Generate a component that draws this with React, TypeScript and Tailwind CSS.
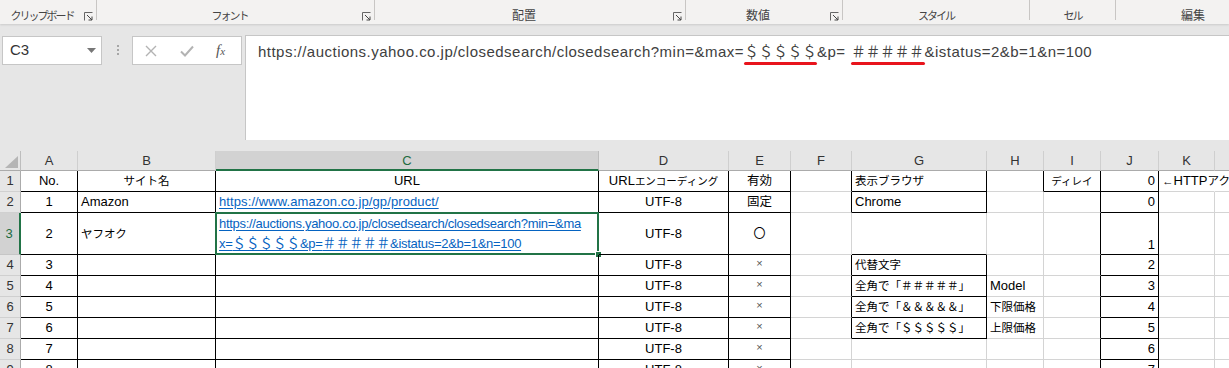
import React from "react";

const COLS = ["A", "B", "C", "D", "E", "F", "G", "H", "I", "J", "K", "L"];
const ROWS = [1, 2, 3, 4, 5, 6, 7, 8, 9];

const Jp = ({ children }: { children: React.ReactNode }) => (
  <span className="text-[11.5px]">{children}</span>
);
const Js = ({ children }: { children: React.ReactNode }) => (
  <span className="text-[10.5px]">{children}</span>
);

const boxed = (r: number, c: number) => {
  if (r < 1 || r > 9) return false;
  if (c >= 0 && c <= 4) return true;
  if (c === 6 && (r === 1 || r === 2 || (r >= 4 && r <= 7))) return true;
  if (c === 8 && r === 1) return true;
  if (c === 9) return true;
  return false;
};

type Cell = {
  node: React.ReactNode;
  h?: "l" | "c" | "r";
  v?: "t" | "m" | "b";
  cls?: string;
};

const Link = ({ children }: { children: React.ReactNode }) => (
  <span className="text-[#0563c1] underline underline-offset-[2px]">{children}</span>
);

const cells: Record<string, Cell> = {
  "1,0": { node: "No.", h: "c" },
  "1,1": { node: <Jp>サイト名</Jp>, h: "c" },
  "1,2": { node: "URL", h: "c" },
  "1,3": { node: <>URL<Js>エンコーディング</Js></>, h: "c" },
  "1,4": { node: <span className="text-[12.5px]">有効</span>, h: "c" },
  "1,6": { node: <Jp>表示ブラウザ</Jp> },
  "1,8": { node: <Js>ディレイ</Js>, h: "c" },
  "1,9": { node: "0", h: "r" },
  "1,10": { node: <><Jp>←</Jp>HTTP<Jp>アクセス間隔</Jp></>, cls: "pl-[1px]" },
  "2,0": { node: "1", h: "c" },
  "2,1": { node: "Amazon" },
  "2,2": { node: <Link>https://www.amazon.co.jp/gp/product/</Link>, cls: "tracking-[0.1px]" },
  "2,3": { node: "UTF-8", h: "c" },
  "2,4": { node: <span className="text-[12.5px]">固定</span>, h: "c" },
  "2,6": { node: "Chrome" },
  "2,9": { node: "0", h: "r" },
  "3,0": { node: "2", h: "c" },
  "3,1": { node: <Jp>ヤフオク</Jp> },
  "3,2": {
    node: (
      <span className="block leading-[20px] tracking-[-0.3px]">
        <Link>https://auctions.yahoo.co.jp/closedsearch/closedsearch?min=&amp;ma</Link>
        <br />
        <Link>
          x=<span className="text-[13.5px] tracking-[0px]">＄＄＄＄＄</span>&amp;p=
          <span className="text-[13.5px] tracking-[0px]">＃＃＃＃＃</span>&amp;istatus=2&amp;b=1&amp;n=100
        </Link>
      </span>
    ),
    v: "t",
    cls: "pt-[1px]",
  },
  "3,3": { node: "UTF-8", h: "c" },
  "3,4": { node: <span className="text-[12px]">〇</span>, h: "c" },
  "3,9": { node: "1", h: "r", v: "b" },
  "4,6": { node: <Jp>代替文字</Jp> },
  "5,6": { node: <Jp>全角で「＃＃＃＃＃」</Jp> },
  "6,6": { node: <Jp>全角で「＆＆＆＆＆」</Jp> },
  "7,6": { node: <Jp>全角で「＄＄＄＄＄」</Jp> },
  "5,7": { node: "Model" },
  "6,7": { node: <Jp>下限価格</Jp> },
  "7,7": { node: <Jp>上限価格</Jp> },
};

for (let r = 4; r <= 9; r++) {
  cells[`${r},0`] = { node: String(r - 1), h: "c" };
  cells[`${r},3`] = { node: "UTF-8", h: "c" };
  cells[`${r},4`] = { node: <span className="text-[11px] text-[#555] relative top-[-2px]">×</span>, h: "c" };
  cells[`${r},9`] = { node: String(r - 2), h: "r" };
}

const Launcher = () => (
  <svg width="9" height="9" viewBox="0 0 9 9" className="mb-[3px] mr-[3px] shrink-0">
    <path d="M0.5 8.5V0.5H8.5" fill="none" stroke="#666" strokeWidth="1" />
    <path d="M3 3L8 8M8 4.5V8H4.5" fill="none" stroke="#444" strokeWidth="1" />
  </svg>
);

const Group = ({ w, label, launcher, kana }: { w: string; label: string; launcher?: boolean; kana?: boolean }) => (
  <div className={`flex h-full shrink-0 ${w}`}>
    <div className="flex flex-1 items-end">
      <div
        className={
          kana
            ? "flex-1 pb-[2px] text-center text-[11px] leading-[14px] tracking-[-2px] text-[#444]"
            : "flex-1 pb-[2px] text-center text-[12px] leading-[14px] text-[#444]"
        }
      >
        {label}
      </div>
      {launcher ? <Launcher /> : null}
    </div>
    <div className="h-[20px] w-px bg-[#c8c6c4]" />
  </div>
);

function Ribbon() {
  return (
    <div className="relative z-10 flex h-[24px] bg-[#f3f2f1] shadow-[0_1px_2px_rgba(0,0,0,0.12)] font-['Noto_Sans_CJK_JP',sans-serif]">
      <Group w="w-[97px]" label="クリップボード" launcher kana />
      <Group w="w-[278px]" label="フォント" launcher kana />
      <Group w="w-[311px]" label="配置" launcher />
      <Group w="w-[157px]" label="数値" launcher />
      <Group w="w-[187px]" label="スタイル" kana />
      <Group w="w-[86px]" label="セル" kana />
      <div className="flex h-full w-[154px] shrink-0 items-end">
        <div className="flex-1 pb-[2px] text-center text-[12px] leading-[14px] text-[#444]">編集</div>
      </div>
    </div>
  );
}

const Mark = ({ children, second }: { children: React.ReactNode; second?: boolean }) => (
  <span
    className={
      second
        ? "relative ml-[5px] inline-block w-[74px] text-center font-['Noto_Sans_CJK_JP',sans-serif] text-[14.5px] tracking-[0px]"
        : "relative inline-block w-[73px] text-center font-['Noto_Sans_CJK_JP',sans-serif] text-[14.5px] tracking-[0px]"
    }
  >
    {children}
    <span className="absolute left-[0px] right-[0px] top-[21px] h-[3px] rounded-full bg-[#e8141c]" />
  </span>
);

function FormulaBar() {
  return (
    <div className="flex h-[127px] items-start bg-[#e6e6e6] font-['Liberation_Sans',sans-serif]">
      <div className="ml-[2px] mt-[12px] flex h-[29px] w-[100px] items-center justify-between border border-[#c6c6c6] bg-white pl-[7px] pr-[5px]">
        <span className="text-[15px] text-[#333]">C3</span>
        <svg width="9" height="5" viewBox="0 0 9 5">
          <path d="M0 0H9L4.5 5Z" fill="#777" />
        </svg>
      </div>
      <div className="ml-[15px] mt-[21px] flex flex-col gap-[2px]">
        <div className="h-[2px] w-[2px] bg-[#a6a6a6]" />
        <div className="h-[2px] w-[2px] bg-[#a6a6a6]" />
        <div className="h-[2px] w-[2px] bg-[#a6a6a6]" />
      </div>
      <div className="ml-[13px] mt-[12px] flex h-[29px] w-[110px] items-center border border-[#c6c6c6] bg-white">
        <svg width="12" height="12" viewBox="0 0 12 12" className="ml-[12px]">
          <path d="M1 1L11 11M11 1L1 11" stroke="#b3b3b3" strokeWidth="1.4" />
        </svg>
        <svg width="14" height="12" viewBox="0 0 14 12" className="ml-[23px]">
          <path d="M1 6.5L5 10.5L13 1.5" fill="none" stroke="#b3b3b3" strokeWidth="2" />
        </svg>
        <span className="ml-[22px] font-['Liberation_Serif',serif] text-[15px] italic text-[#555]">
          f<span className="text-[11px]">x</span>
        </span>
      </div>
      <div className="ml-[3px] mt-[11px] h-[105px] flex-1 whitespace-nowrap border-l border-t border-[#c6c6c6] bg-white pl-[12px] pt-[5px] text-[15px] leading-[20px] tracking-[0.48px] text-[#404040]">
        https://auctions.yahoo.co.jp/closedsearch/closedsearch?min=&amp;max=<Mark>＄＄＄＄＄</Mark>&amp;p=<Mark second>＃＃＃＃＃</Mark>&amp;istatus=2&amp;b=1&amp;n=100
      </div>
    </div>
  );
}

function Sheet() {
  const out: React.ReactNode[] = [];
  out.push(
    <div key="corner" className="relative border-b border-r border-b-[#ababab] border-r-[#bdbdbd] bg-[#e6e6e6]">
      <svg width="13" height="12" viewBox="0 0 13 12" className="absolute bottom-[2px] right-[2px]">
        <path d="M13 0V12H0Z" fill="#b5b5b5" />
      </svg>
    </div>
  );
  COLS.forEach((c) => {
    const sel = c === "C";
    out.push(
      <div
        key={`h${c}`}
        className={
          sel
            ? "flex items-center justify-center border-b-2 border-r border-b-[#217346] border-r-[#bdbdbd] bg-[#d2d2d2] pt-[1px] text-[13px] text-[#1e6b3f]"
            : "flex items-center justify-center border-b border-r border-b-[#ababab] border-r-[#cfcfcf] bg-[#e6e6e6] text-[13px] text-[#333]"
        }
      >
        {c}
      </div>
    );
  });
  ROWS.forEach((r) => {
    const sel = r === 3;
    out.push(
      <div
        key={`r${r}`}
        className={
          sel
            ? "flex items-center justify-center border-b border-r-2 border-b-[#c6c6c6] border-r-[#217346] bg-[#d2d2d2] pr-[1px] text-[13px] text-[#1e6b3f]"
            : "flex items-center justify-center border-b border-r border-b-[#d0d0d0] border-r-[#ababab] bg-[#e6e6e6] text-[13px] text-[#333]"
        }
      >
        {r}
      </div>
    );
    COLS.forEach((_, ci) => {
      const cell = cells[`${r},${ci}`];
      const rightBlack = boxed(r, ci) || boxed(r, ci + 1);
      const bottomBlack = boxed(r, ci) || boxed(r + 1, ci);
      const overflowK = r === 1 && ci === 10;
      const h = cell?.h ?? "l";
      const v = cell?.v ?? "m";
      const cls = [
        "relative flex whitespace-nowrap border-b border-r text-[13px] leading-[16px] text-black",
        overflowK ? "border-r-white" : rightBlack ? "border-r-black" : "border-r-[#d4d4d4]",
        bottomBlack ? "border-b-black" : "border-b-[#d4d4d4]",
        h === "c" ? "justify-center px-[2px]" : h === "r" ? "justify-end pr-[3px]" : "justify-start pl-[3px]",
        v === "t" ? "items-start" : v === "b" ? "items-end pb-[1px]" : "items-center",
        cell?.cls ?? "",
      ].join(" ");
      out.push(
        <div key={`c${r}-${ci}`} className={cls}>
          {cell?.node}
          {r === 3 && ci === 2 ? (
            <>
              <div className="pointer-events-none absolute bottom-[-1px] left-[-1px] right-[-1px] top-[-1px] border-2 border-[#217346]" />
              <div className="absolute bottom-[-4px] right-[-4px] h-[7px] w-[7px] border border-white bg-[#217346]" />
            </>
          ) : null}
        </div>
      );
    });
  });
  return (
    <div className="grid grid-cols-[21px_57px_138px_383px_130px_62px_61px_135px_57px_57px_58px_56px_60px] grid-rows-[20px_21px_21px_42px_21px_21px_21px_21px_21px_21px] bg-white font-['Liberation_Sans','Noto_Sans_CJK_JP',sans-serif]">
      {out}
    </div>
  );
}

export default function App() {
  return (
    <div className="h-[368px] w-[1229px] overflow-hidden bg-[#e6e6e6] font-['Liberation_Sans','Noto_Sans_CJK_JP',sans-serif]">
      <Ribbon />
      <FormulaBar />
      <Sheet />
    </div>
  );
}
